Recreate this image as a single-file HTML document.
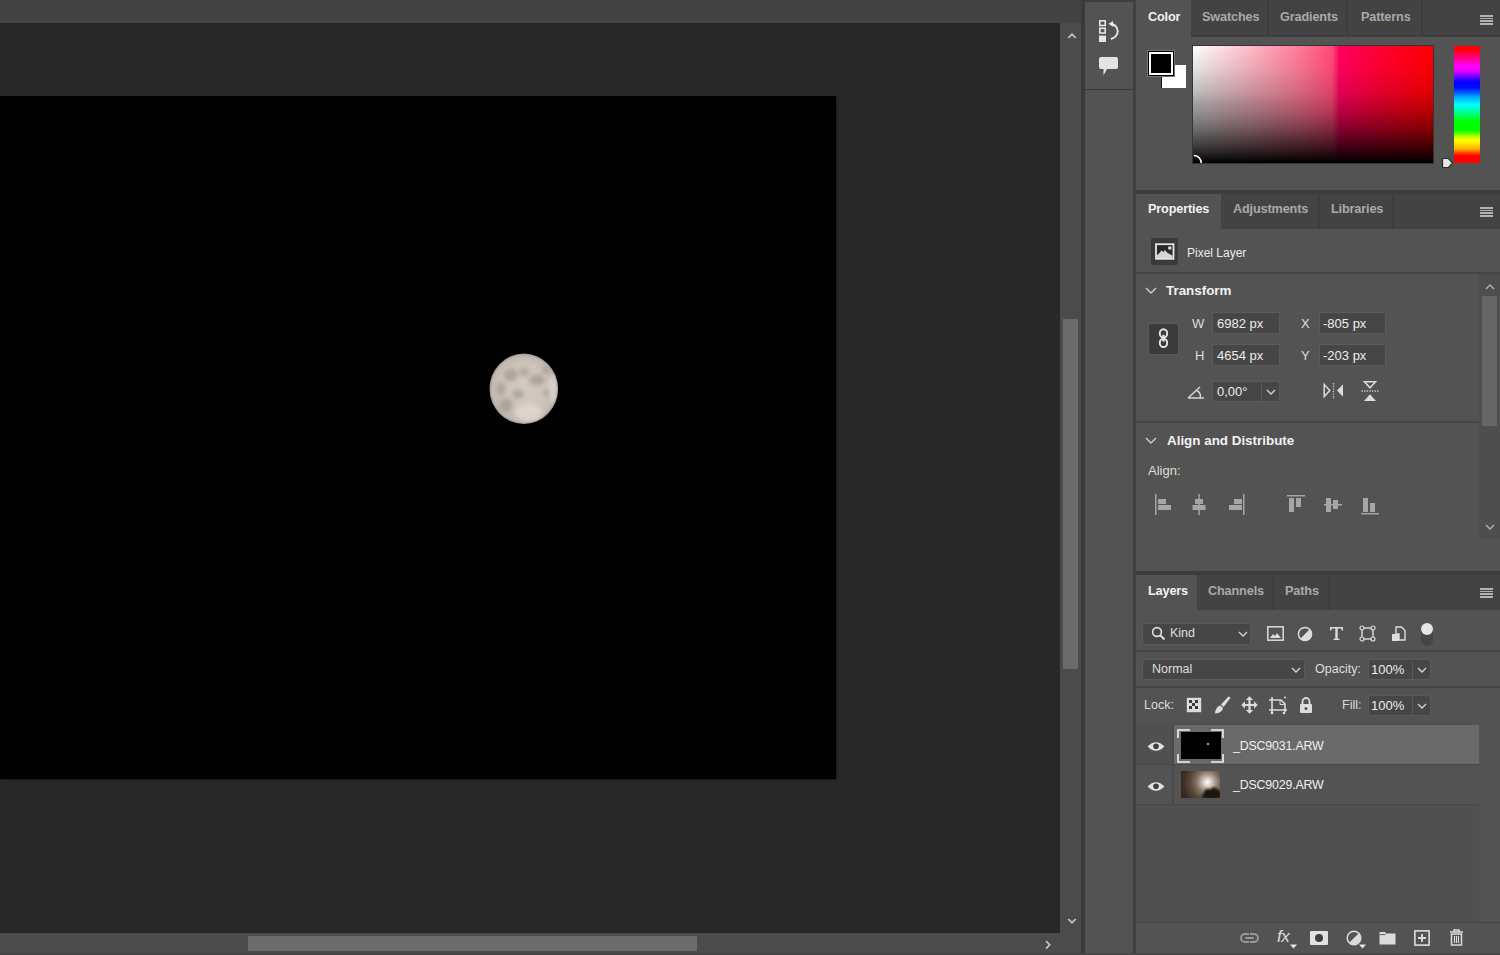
<!DOCTYPE html>
<html><head><meta charset="utf-8">
<style>
*{box-sizing:border-box;margin:0;padding:0}
html,body{width:1500px;height:955px;overflow:hidden;background:#282828;font-family:"Liberation Sans",sans-serif;color:#e6e6e6}
.a{position:absolute}
.t{position:absolute;line-height:1;white-space:nowrap}
.tab{position:absolute;background:#434343}
.tab.on{background:#535353}
.tt{position:absolute;line-height:1;white-space:nowrap;font-size:12.7px;letter-spacing:-0.15px;font-weight:bold;color:#a9a9a9}
.tt.on{color:#f2f2f2}
.tsep{position:absolute;width:2px;background:#3c3c3c}
.hamb{position:absolute;width:13px;height:10px;background:repeating-linear-gradient(#b4b4b4 0 1.6px,transparent 1.6px 2.75px)}
.inp{position:absolute;background:#464646;border:1px solid #5b5b5b;border-radius:1px}
.lbl{position:absolute;line-height:1;white-space:nowrap;font-size:12.5px;color:#dedede}
.num{position:absolute;line-height:1;white-space:nowrap;font-size:13px;color:#ececec}
.hdr{position:absolute;line-height:1;white-space:nowrap;font-size:13.4px;font-weight:bold;color:#f2f2f2}
.ln{position:absolute;background:#474747}
svg{position:absolute;overflow:visible}
</style></head><body>
<!-- ============ CANVAS AREA ============ -->
<div class="a" style="left:0;top:0;width:1081px;height:23px;background:#434343"></div>
<div class="a" style="left:0;top:22px;width:1060px;height:1px;background:#474747"></div>
<div class="a" style="left:0;top:96px;width:836px;height:683px;background:#000;box-shadow:1px 1px 2px rgba(0,0,0,.35)"></div>
<!-- moon -->
<svg style="left:0;top:0" width="1" height="1"><defs>
<radialGradient id="mg" cx="0.5" cy="0.5" r="0.5">
<stop offset="0" stop-color="#d3cbc4"/><stop offset="0.7" stop-color="#cdc4bc"/><stop offset="0.93" stop-color="#c2b8b0"/><stop offset="1" stop-color="#9d948d"/></radialGradient>
<radialGradient id="glow" cx="0.62" cy="0.28" r="0.6">
<stop offset="0" stop-color="#fff" stop-opacity=".9"/><stop offset="0.25" stop-color="#e9ddd0" stop-opacity=".6"/><stop offset="1" stop-color="#5a4a3d" stop-opacity="0"/></radialGradient>
</defs></svg>
<svg style="left:487px;top:351px" width="74" height="76" viewBox="-2 -2 74 76">
<defs><filter id="bl" x="-20%" y="-20%" width="140%" height="140%"><feGaussianBlur stdDeviation="2.2"/></filter>
<filter id="bl2"><feGaussianBlur stdDeviation="0.7"/></filter>
<clipPath id="mc"><ellipse cx="34.8" cy="35.8" rx="34" ry="35"/></clipPath></defs>
<ellipse cx="34.8" cy="35.8" rx="34.3" ry="35.2" fill="url(#mg)" filter="url(#bl2)"/>
<g clip-path="url(#mc)"><g fill="#8f8680" opacity=".5" filter="url(#bl)">
<ellipse cx="22" cy="22" rx="7" ry="6.5"/><ellipse cx="35" cy="19" rx="5" ry="4"/><ellipse cx="48" cy="27" rx="8" ry="5.5"/>
<ellipse cx="57" cy="17" rx="4" ry="3.5"/><ellipse cx="17" cy="52" rx="7" ry="7"/><ellipse cx="29" cy="41" rx="6" ry="4.5"/>
<ellipse cx="12" cy="36" rx="4" ry="7"/><ellipse cx="58" cy="40" rx="3" ry="4"/>
</g>
<g fill="#e8e0d8" opacity=".6" filter="url(#bl)"><ellipse cx="40" cy="60" rx="14" ry="9"/><ellipse cx="64" cy="36" rx="4" ry="14"/></g></g>
</svg>
<!-- vertical scrollbar -->
<div class="a" style="left:1060px;top:23px;width:21px;height:932px;background:#4b4b4b"></div>
<div class="a" style="left:1063px;top:319px;width:15px;height:350px;background:#6b6b6b"></div>
<svg style="left:1067px;top:33px" width="10" height="6"><path d="M1.2 5 L5 1.3 L8.8 5" fill="none" stroke="#c4c4c4" stroke-width="1.7"/></svg>
<svg style="left:1067px;top:918px" width="10" height="6"><path d="M1.2 1 L5 4.7 L8.8 1" fill="none" stroke="#c4c4c4" stroke-width="1.7"/></svg>
<!-- horizontal scrollbar -->
<div class="a" style="left:0;top:933px;width:1060px;height:20px;background:#4b4b4b"></div>
<div class="a" style="left:0;top:953px;width:1081px;height:2px;background:#444"></div>
<div class="a" style="left:248px;top:936px;width:449px;height:15px;background:#6b6b6b"></div>
<svg style="left:1045px;top:940px" width="6" height="10"><path d="M1 1 L4.7 4.8 L1 8.6" fill="none" stroke="#c4c4c4" stroke-width="1.7"/></svg>
<!-- dark separators -->
<div class="a" style="left:1081px;top:0;width:4px;height:955px;background:#3a3a3a"></div>
<div class="a" style="left:1133px;top:0;width:3px;height:955px;background:#404040"></div>
<!-- toolbar column -->
<div class="a" style="left:1085px;top:0;width:48px;height:955px;background:#535353"></div>
<div class="a" style="left:1085px;top:0;width:48px;height:2px;background:#3f3f3f"></div>
<div class="a" style="left:1085px;top:89px;width:48px;height:1px;background:#3a3a3a"></div>
<!-- history icon -->
<svg style="left:1099px;top:20px" width="20" height="23" viewBox="0 0 20 23">
<rect x="0.8" y="0.8" width="5.4" height="4.7" fill="none" stroke="#e6e6e6" stroke-width="1.6"/>
<rect x="0.8" y="8.3" width="5.4" height="4.7" fill="none" stroke="#e6e6e6" stroke-width="1.6"/>
<rect x="0" y="15.6" width="7" height="6.4" fill="#e6e6e6"/>
<path d="M12.3 4 C17.5 4.5 19.5 10 18.3 13.5 C17.5 16 15 18 12 19" fill="none" stroke="#e6e6e6" stroke-width="1.9"/>
<path d="M9.5 3.8 L14 1 L14.3 7 Z" fill="#e6e6e6"/>
</svg>
<!-- comment icon -->
<svg style="left:1099px;top:57px" width="20" height="19" viewBox="0 0 20 19">
<path d="M2 0 H17 Q19 0 19 2 V10 Q19 12 17 12 H8 L4.5 18.5 L4.5 12 H2 Q0 12 0 10 V2 Q0 0 2 0 Z" fill="#e3e3e3"/>
</svg>
<!-- ============ COLOR PANEL ============ -->
<div class="a" style="left:1136px;top:0;width:364px;height:190px;background:#535353"></div>
<div class="tab" style="left:1191px;top:0;width:309px;height:37px"></div>
<div class="a" style="left:1136px;top:35px;width:364px;height:2px;background:#3e3e3e"></div>
<div class="tab on" style="left:1136px;top:2px;width:55px;height:36px"></div>
<div class="tsep" style="left:1267px;top:0;height:36px"></div>
<div class="tsep" style="left:1346px;top:0;height:36px"></div>
<div class="tsep" style="left:1421px;top:0;height:36px"></div>
<div class="tt on" style="left:1148px;top:10.5px">Color</div>
<div class="tt" style="left:1202px;top:10.5px">Swatches</div>
<div class="tt" style="left:1280px;top:10.5px">Gradients</div>
<div class="tt" style="left:1361px;top:10.5px">Patterns</div>
<div class="hamb" style="left:1480px;top:15px"></div>
<!-- swatches -->
<div class="a" style="left:1161px;top:65px;width:1px;height:23px;background:#111"></div>
<div class="a" style="left:1162px;top:65px;width:24px;height:23px;background:#fff"></div>
<div class="a" style="left:1147px;top:50px;width:28px;height:27px;background:#767676"></div>
<div class="a" style="left:1148px;top:51px;width:26px;height:25px;background:#000"></div>
<div class="a" style="left:1149px;top:52px;width:24px;height:23px;background:#fff"></div>
<div class="a" style="left:1151px;top:54px;width:20px;height:19px;background:#000"></div>
<!-- color field -->
<div class="a" style="left:1192px;top:45px;width:242px;height:119px;background:#353535"></div>
<div class="a" style="left:1193px;top:46px;width:240px;height:117px;background:linear-gradient(to bottom,rgba(0,0,0,0) 0%,rgba(0,0,0,.03) 20%,rgba(0,0,0,.12) 40%,rgba(0,0,0,.27) 55%,rgba(0,0,0,.47) 70%,rgba(0,0,0,.72) 85%,rgba(0,0,0,1) 100%),linear-gradient(to right,#ffffff 0%,#ffc0cc 22%,#ff7896 45%,#ff4a78 58%,#ff005e 61%,#ff002c 80%,#ff0000 100%)"></div>
<div class="a" style="left:1193px;top:46px;width:240px;height:117px;background:linear-gradient(to bottom,rgba(0,0,0,0) 0%,rgba(0,0,0,.1) 25%,rgba(0,0,0,.2) 50%,rgba(0,0,0,.15) 80%,rgba(0,0,0,0) 100%);-webkit-mask-image:linear-gradient(to right,#000 0%,rgba(0,0,0,.6) 30%,transparent 60%)"></div>
<svg style="left:1188px;top:150px" width="18" height="14"><path d="M5.8 5.5 A7.5 7.5 0 0 1 13.3 13" fill="none" stroke="#fff" stroke-width="1.6"/></svg>
<!-- hue bar -->
<div class="a" style="left:1454px;top:46px;width:26px;height:117px;background:linear-gradient(to bottom,#ff0000 0%,#ff0008 3%,#ff00a0 12%,#ff00ff 17%,#f000ff 21%,#4000ff 28%,#0000ff 31%,#0010ff 36%,#00b0ff 44%,#00ffff 50%,#00ff90 57%,#00ff00 64%,#00ff00 72%,#d0ff00 78%,#ffff00 81%,#ffb000 88%,#ff3000 92%,#ff0000 94%,#ff0000 100%)"></div>
<svg style="left:1441px;top:157px" width="13" height="13" viewBox="0 0 13 13"><path d="M2.5 1.5 H7.5 L11.5 6 L7.5 10.5 H2.5 Q1.5 10.5 1.5 9.5 V2.5 Q1.5 1.5 2.5 1.5 Z" fill="#e6e6e6" stroke="#2a2a2a" stroke-width="1.2"/></svg>
<div class="a" style="left:1136px;top:190px;width:364px;height:4px;background:#3c3c3c"></div>
<!-- ============ PROPERTIES PANEL ============ -->
<div class="a" style="left:1136px;top:194px;width:364px;height:377px;background:#535353"></div>
<div class="tab" style="left:1221px;top:194px;width:279px;height:35px"></div>
<div class="tab on" style="left:1136px;top:194px;width:85px;height:36px"></div>
<div class="tsep" style="left:1318px;top:194px;height:35px"></div>
<div class="tsep" style="left:1392px;top:194px;height:35px"></div>
<div class="tt on" style="left:1148px;top:203px">Properties</div>
<div class="tt" style="left:1233px;top:203px">Adjustments</div>
<div class="tt" style="left:1331px;top:203px">Libraries</div>
<div class="hamb" style="left:1480px;top:207px"></div>
<!-- pixel layer -->
<div class="a" style="left:1151px;top:238px;width:27px;height:27px;background:#3a3a3a;border-radius:2px"></div>
<svg style="left:1155px;top:243px" width="20" height="17" viewBox="0 0 20 17">
<rect x="1" y="1.2" width="17.5" height="14.6" fill="#2a2a2a" stroke="#e6e6e6" stroke-width="1.8"/>
<path d="M2 15 L2 12 L4.5 10 L6.5 7.5 L8.5 9 L10 7 L12 9.5 L14.5 11 L17.5 12.5 L17.5 15 Z" fill="#d4d4d4"/>
<rect x="13.3" y="3.5" width="3" height="3" fill="#e6e6e6"/>
</svg>
<div class="lbl" style="left:1187px;top:247px;font-size:12px;color:#ececec">Pixel Layer</div>
<div class="ln" style="left:1136px;top:272px;width:364px;height:2px"></div>
<!-- scrollbar -->
<div class="a" style="left:1479px;top:274px;width:21px;height:265px;background:#4e4e4e"></div>
<div class="a" style="left:1482px;top:296px;width:15px;height:130px;background:#666"></div>
<svg style="left:1485px;top:284px" width="10" height="6"><path d="M1 5 L5 1 L9 5" fill="none" stroke="#b5b5b5" stroke-width="1.3"/></svg>
<svg style="left:1485px;top:524px" width="10" height="6"><path d="M1 1 L5 5 L9 1" fill="none" stroke="#b5b5b5" stroke-width="1.3"/></svg>
<!-- transform -->
<svg style="left:1145px;top:287px" width="12" height="8"><path d="M1 1 L6 6 L11 1" fill="none" stroke="#d0d0d0" stroke-width="1.4"/></svg>
<div class="hdr" style="left:1166px;top:284.3px">Transform</div>
<div class="a" style="left:1149px;top:324px;width:29px;height:30px;background:#3b3b3b;border-radius:2px;box-shadow:0 0 0 1px #5a5a5a"></div>
<svg style="left:1158px;top:328px" width="11" height="21" viewBox="0 0 11 21">
<ellipse cx="5.5" cy="5.4" rx="3.7" ry="4.1" fill="none" stroke="#e6e6e6" stroke-width="1.9"/>
<ellipse cx="5.5" cy="14.9" rx="3.7" ry="4.1" fill="none" stroke="#e6e6e6" stroke-width="1.9"/>
<rect x="4.4" y="6.8" width="2.2" height="6.8" fill="#e6e6e6"/>
</svg>
<div class="lbl" style="left:1192px;top:317px;font-size:13px">W</div>
<div class="lbl" style="left:1195px;top:349px;font-size:13px">H</div>
<div class="lbl" style="left:1301px;top:317px;font-size:13px">X</div>
<div class="lbl" style="left:1301px;top:349px;font-size:13px">Y</div>
<div class="inp" style="left:1212px;top:312px;width:68px;height:22px"></div>
<div class="inp" style="left:1212px;top:344px;width:68px;height:22px"></div>
<div class="inp" style="left:1319px;top:312px;width:67px;height:22px"></div>
<div class="inp" style="left:1319px;top:344px;width:67px;height:22px"></div>
<div class="num" style="left:1217px;top:317px">6982 px</div>
<div class="num" style="left:1217px;top:349px">4654 px</div>
<div class="num" style="left:1323px;top:317px">-805 px</div>
<div class="num" style="left:1323px;top:349px">-203 px</div>
<!-- angle -->
<svg style="left:1187px;top:385px" width="19" height="14" viewBox="0 0 19 14"><path d="M1 13 L17 13 M1 13 L13 2 M10 5.5 Q14 8 13.5 13" fill="none" stroke="#d6d6d6" stroke-width="1.5"/></svg>
<div class="inp" style="left:1212px;top:381px;width:68px;height:21px"></div>
<div class="a" style="left:1261px;top:382px;width:1px;height:19px;background:#5a5a5a"></div>
<div class="num" style="left:1217px;top:385px">0,00°</div>
<svg style="left:1266px;top:389px" width="10" height="6"><path d="M1 1 L5 5 L9 1" fill="none" stroke="#d6d6d6" stroke-width="1.3"/></svg>
<!-- flip icons -->
<svg style="left:1323px;top:383px" width="21" height="16" viewBox="0 0 21 16">
<path d="M1.2 1.5 L6.8 7.5 L1.2 13.5 Z" fill="none" stroke="#dcdcdc" stroke-width="1.5"/>
<path d="M20 1.2 L14 7.5 L20 13.8 Z" fill="#dcdcdc"/>
<path d="M10.5 0 V16" stroke="#c4c4c4" stroke-width="1.3" stroke-dasharray="1.4 1.2"/>
</svg>
<svg style="left:1360px;top:380px" width="20" height="22" viewBox="0 0 20 22">
<path d="M4.5 1.8 H15.5 L10 7.8 Z" fill="none" stroke="#dcdcdc" stroke-width="1.5"/>
<path d="M4 21 H16 L10 14.3 Z" fill="#dcdcdc"/>
<path d="M1.5 11 H18.5" stroke="#c4c4c4" stroke-width="1.3" stroke-dasharray="1.4 1.2"/>
</svg>
<div class="ln" style="left:1136px;top:421px;width:343px;height:2px"></div>
<!-- align -->
<svg style="left:1145px;top:437px" width="12" height="8"><path d="M1 1 L6 6 L11 1" fill="none" stroke="#d0d0d0" stroke-width="1.4"/></svg>
<div class="hdr" style="left:1167px;top:434.3px">Align and Distribute</div>
<div class="lbl" style="left:1148px;top:464px;font-size:13px">Align:</div>
<svg style="left:1154px;top:494px" width="230" height="22" viewBox="0 0 230 22" fill="#a6a6a6">
<rect x="1" y="0" width="1.5" height="21"/><rect x="4" y="5" width="8" height="5"/><rect x="4" y="11" width="13" height="5"/>
<rect x="44.3" y="0" width="1.5" height="21"/><rect x="41" y="5" width="8" height="5"/><rect x="38.5" y="11" width="13" height="5"/>
<rect x="89" y="0" width="1.5" height="21"/><rect x="80" y="5" width="8" height="5"/><rect x="75" y="11" width="13" height="5"/>
<rect x="133" y="1" width="18" height="1.5"/><rect x="135" y="4" width="5" height="14"/><rect x="142" y="4" width="5" height="9"/>
<rect x="170" y="10" width="18" height="1.5"/><rect x="172" y="4" width="5" height="14"/><rect x="179" y="6" width="5" height="9"/>
<rect x="207" y="19" width="18" height="1.5"/><rect x="209" y="4" width="5" height="14"/><rect x="216" y="9" width="5" height="9"/>
</svg>
<div class="a" style="left:1136px;top:571px;width:364px;height:4px;background:#3c3c3c"></div>
<!-- ============ LAYERS PANEL ============ -->
<div class="a" style="left:1136px;top:575px;width:364px;height:380px;background:#535353"></div>
<div class="tab" style="left:1197px;top:575px;width:303px;height:35px"></div>
<div class="tab on" style="left:1136px;top:575px;width:61px;height:36px"></div>
<div class="tsep" style="left:1272px;top:575px;height:35px"></div>
<div class="tsep" style="left:1328px;top:575px;height:35px"></div>
<div class="tt on" style="left:1148px;top:584.5px">Layers</div>
<div class="tt" style="left:1208px;top:584.5px">Channels</div>
<div class="tt" style="left:1285px;top:584.5px">Paths</div>
<div class="hamb" style="left:1480px;top:588px"></div>
<!-- kind row -->
<div class="inp" style="left:1142px;top:623px;width:109px;height:22px;border-color:#5a5a5a;border-radius:3px"></div>
<svg style="left:1151px;top:626px" width="15" height="15" viewBox="0 0 15 15"><circle cx="6" cy="6" r="4.4" fill="none" stroke="#e0e0e0" stroke-width="1.6"/><path d="M9.2 9.2 L13.5 13.5" stroke="#e0e0e0" stroke-width="2"/></svg>
<div class="lbl" style="left:1170px;top:627px">Kind</div>
<svg style="left:1238px;top:631px" width="10" height="6"><path d="M1 1 L5 5 L9 1" fill="none" stroke="#d6d6d6" stroke-width="1.3"/></svg>
<svg style="left:1267px;top:626px" width="17" height="15" viewBox="0 0 17 15"><rect x="0.8" y="0.8" width="15.4" height="13.4" fill="none" stroke="#dcdcdc" stroke-width="1.5"/><path d="M3 12 L6 8 L8 10 L10 7 L14 12 Z" fill="#dcdcdc"/></svg>
<svg style="left:1297px;top:626px" width="16" height="16" viewBox="0 0 16 16"><circle cx="8" cy="8" r="6.6" fill="none" stroke="#dcdcdc" stroke-width="1.5"/><path d="M12.7 3.3 A6.6 6.6 0 0 1 3.3 12.7 Z" fill="#dcdcdc"/></svg>
<svg style="left:1329px;top:626px" width="15" height="15" viewBox="0 0 15 15"><path d="M1 1 H14 V4.5 H12.8 L12.2 2.6 H8.7 V12.5 L10.5 13 V14 H4.5 V13 L6.3 12.5 V2.6 H2.8 L2.2 4.5 H1 Z" fill="#dcdcdc"/></svg>
<svg style="left:1359px;top:625px" width="17" height="17" viewBox="0 0 17 17"><rect x="3" y="3" width="11" height="11" fill="none" stroke="#dcdcdc" stroke-width="1.4"/><circle cx="3" cy="3" r="2" fill="#535353" stroke="#dcdcdc" stroke-width="1.2"/><circle cx="14" cy="3" r="2" fill="#535353" stroke="#dcdcdc" stroke-width="1.2"/><circle cx="3" cy="14" r="2" fill="#535353" stroke="#dcdcdc" stroke-width="1.2"/><circle cx="14" cy="14" r="2" fill="#535353" stroke="#dcdcdc" stroke-width="1.2"/></svg>
<svg style="left:1391px;top:626px" width="15" height="16" viewBox="0 0 15 16"><path d="M5 1 H10.5 L14 4.5 V14 H8 V8 H5 Z" fill="none" stroke="#dcdcdc" stroke-width="1.4"/><rect x="1" y="8" width="7" height="7" fill="#dcdcdc"/></svg>
<div class="a" style="left:1421px;top:623px;width:12px;height:23px;border-radius:6px;background:#454545"></div>
<div class="a" style="left:1421px;top:623px;width:12px;height:12px;border-radius:6px;background:#e6e6e6"></div>
<div class="ln" style="left:1136px;top:650px;width:364px;height:2px;background:#474747"></div>
<!-- blend row -->
<div class="inp" style="left:1142px;top:659px;width:163px;height:21px;border-color:#5a5a5a;border-radius:3px"></div>
<div class="lbl" style="left:1152px;top:663px">Normal</div>
<svg style="left:1291px;top:667px" width="10" height="6"><path d="M1 1 L5 5 L9 1" fill="none" stroke="#d6d6d6" stroke-width="1.3"/></svg>
<div class="lbl" style="left:1315px;top:663px">Opacity:</div>
<div class="inp" style="left:1368px;top:659px;width:63px;height:21px;border-color:#5a5a5a;border-radius:3px"></div>
<div class="a" style="left:1412px;top:661px;width:1px;height:18px;background:#5a5a5a"></div>
<div class="num" style="left:1371px;top:663px">100%</div>
<svg style="left:1417px;top:667px" width="10" height="6"><path d="M1 1 L5 5 L9 1" fill="none" stroke="#d6d6d6" stroke-width="1.3"/></svg>
<div class="ln" style="left:1136px;top:686px;width:364px;height:2px;background:#474747"></div>
<!-- lock row -->
<div class="lbl" style="left:1144px;top:699px">Lock:</div>
<svg style="left:1186px;top:697px" width="16" height="16" viewBox="0 0 16 16"><rect x="0.8" y="0.8" width="14.4" height="14.4" fill="#dcdcdc"/><g fill="#3a3a3a"><rect x="3" y="3" width="3" height="3"/><rect x="9" y="3" width="3" height="3"/><rect x="6" y="6" width="3" height="3"/><rect x="3" y="9" width="3" height="3"/><rect x="9" y="9" width="3" height="3"/></g></svg>
<svg style="left:1214px;top:696px" width="17" height="18" viewBox="0 0 17 18"><path d="M15 0.5 Q16.8 1.2 16 2.6 L9.6 11 L7 8.6 L14 1 Z" fill="#dcdcdc"/><path d="M6.3 9.3 L9 11.9 Q8.5 16.5 1 17.5 Q1.5 11 6.3 9.3 Z" fill="#dcdcdc"/></svg>
<svg style="left:1241px;top:696px" width="17" height="18" viewBox="0 0 17 18" fill="#dcdcdc"><path d="M8.5 0.3 L12.2 4 H9.6 V7.9 H13 V5.3 L16.7 9 L13 12.7 V10.1 H9.6 V14 H12.2 L8.5 17.7 L4.8 14 H7.4 V10.1 H4 V12.7 L0.3 9 L4 5.3 V7.9 H7.4 V4 H4.8 Z"/></svg>
<svg style="left:1268px;top:696px" width="20" height="19" viewBox="0 0 20 19"><path d="M4 1 V16 M1 4 H13 L17 8 V16 M1 14 H19" fill="none" stroke="#dcdcdc" stroke-width="1.6"/><path d="M12 4 V8.5 H16.5" fill="none" stroke="#dcdcdc" stroke-width="1"/><circle cx="4" cy="17" r="1.3" fill="#dcdcdc"/><circle cx="16" cy="17" r="1.3" fill="#dcdcdc"/><circle cx="17" cy="1.5" r="1" fill="#dcdcdc"/></svg>
<svg style="left:1299px;top:697px" width="14" height="16" viewBox="0 0 14 16"><path d="M3.5 7 V4.5 A3.5 3.5 0 0 1 10.5 4.5 V7" fill="none" stroke="#dcdcdc" stroke-width="1.8"/><rect x="1" y="7" width="12" height="9" rx="1" fill="#dcdcdc"/><circle cx="7" cy="11.5" r="1.5" fill="#535353"/></svg>
<div class="lbl" style="left:1342px;top:699px">Fill:</div>
<div class="inp" style="left:1368px;top:695px;width:63px;height:21px;border-color:#5a5a5a;border-radius:3px"></div>
<div class="a" style="left:1412px;top:697px;width:1px;height:17px;background:#5a5a5a"></div>
<div class="num" style="left:1371px;top:699px">100%</div>
<svg style="left:1417px;top:703px" width="10" height="6"><path d="M1 1 L5 5 L9 1" fill="none" stroke="#d6d6d6" stroke-width="1.3"/></svg>
<!-- layer list -->
<div class="a" style="left:1136px;top:724px;width:343px;height:199px;background:#505050"></div>
<div class="a" style="left:1173px;top:725px;width:306px;height:39px;background:#6a6a6a"></div>
<div class="a" style="left:1136px;top:764px;width:343px;height:1px;background:#484848"></div>
<div class="a" style="left:1136px;top:765px;width:343px;height:39px;background:#535353"></div>
<div class="a" style="left:1136px;top:804px;width:343px;height:1px;background:#484848"></div>
<div class="a" style="left:1172px;top:725px;width:2px;height:80px;background:#4a4a4a"></div>
<svg style="left:1147px;top:741px" width="18" height="11" viewBox="0 0 18 11"><path d="M0.5 5.5 Q9 -3 17.5 5.5 Q9 14 0.5 5.5 Z" fill="#e2e2e2"/><circle cx="9" cy="5.3" r="2.8" fill="#3e3e3e"/></svg>
<svg style="left:1147px;top:781px" width="18" height="11" viewBox="0 0 18 11"><path d="M0.5 5.5 Q9 -3 17.5 5.5 Q9 14 0.5 5.5 Z" fill="#e2e2e2"/><circle cx="9" cy="5.3" r="2.8" fill="#3e3e3e"/></svg>
<div class="a" style="left:1181px;top:732px;width:40px;height:27px;background:#000"></div>
<div class="a" style="left:1207px;top:743px;width:2px;height:2px;background:#ddd;border-radius:1px"></div>
<svg style="left:1177px;top:729px" width="47" height="34" viewBox="0 0 47 34"><path d="M1 9 V1 H13 M34 1 H46 V9 M46 25 V33 H34 M13 33 H1 V25" fill="none" stroke="#f2f2f2" stroke-width="1.6"/></svg>
<div class="a" style="left:1181px;top:771px;width:39px;height:27px;background:radial-gradient(circle at 68% 42%,#ffffff 0,#e6ded6 9%,#b4a89a 22%,#857464 36%,#5a4a3c 55%,#3a2e25 80%,#2c231c 100%)"></div>
<svg style="left:1181px;top:771px;overflow:hidden" width="39" height="27" viewBox="0 0 39 27"><defs><filter id="tb"><feGaussianBlur stdDeviation="0.8"/></filter></defs>
<g fill="#1a1410" filter="url(#tb)"><ellipse cx="27" cy="22" rx="4" ry="4"/><ellipse cx="33" cy="21" rx="4" ry="4.5"/><ellipse cx="37" cy="23" rx="3" ry="4"/><ellipse cx="30" cy="26" rx="8" ry="2.5"/><ellipse cx="23.5" cy="25" rx="2.5" ry="2.5"/></g></svg>
<div class="lbl" style="left:1233px;top:740px;font-size:12.4px;letter-spacing:-0.18px;color:#f0f0f0">_DSC9031.ARW</div>
<div class="lbl" style="left:1233px;top:779px;font-size:12.4px;letter-spacing:-0.18px;color:#f0f0f0">_DSC9029.ARW</div>
<div class="a" style="left:1136px;top:922px;width:364px;height:1px;background:#444"></div>
<!-- bottom icons -->
<svg style="left:1240px;top:932px" width="19" height="12" viewBox="0 0 19 12"><path d="M9 2 H5 A4 4 0 0 0 5 10 H9 M10 2 H14 A4 4 0 0 1 14 10 H10 M5.5 6 H13.5" fill="none" stroke="#9a9a9a" stroke-width="1.9"/></svg>
<div class="t" style="left:1277px;top:928px;font-size:17px;font-style:italic;color:#dedede;font-family:'Liberation Sans',sans-serif;letter-spacing:-0.5px">fx</div>
<svg style="left:1290px;top:944px" width="7" height="5"><path d="M0 0.5 H7 L3.5 4.5 Z" fill="#e6e6e6"/></svg>
<svg style="left:1310px;top:931px" width="18" height="14" viewBox="0 0 18 14"><rect x="0" y="0" width="18" height="14" rx="1" fill="#e2e2e2"/><circle cx="9" cy="7" r="4" fill="#3e3e3e"/></svg>
<svg style="left:1346px;top:930px" width="16" height="16" viewBox="0 0 16 16"><circle cx="8" cy="8" r="6.8" fill="none" stroke="#dcdcdc" stroke-width="1.5"/><path d="M12.8 3.2 A6.8 6.8 0 0 1 3.2 12.8 Z" fill="#dcdcdc"/></svg>
<svg style="left:1359px;top:944px" width="7" height="5"><path d="M0 0.5 H7 L3.5 4.5 Z" fill="#e6e6e6"/></svg>
<svg style="left:1379px;top:931px" width="17" height="14" viewBox="0 0 17 14"><path d="M0.5 1 H6 L7 2.5 H16.5 V13.5 H0.5 Z" fill="#dcdcdc"/><path d="M0.5 3.6 H6.5" stroke="#535353" stroke-width="0.9"/></svg>
<svg style="left:1414px;top:930px" width="16" height="16" viewBox="0 0 16 16"><rect x="0.9" y="0.9" width="14.2" height="14.2" fill="none" stroke="#dcdcdc" stroke-width="1.6"/><path d="M8 4 V12 M4 8 H12" stroke="#dcdcdc" stroke-width="1.8"/></svg>
<svg style="left:1449px;top:929px" width="15" height="17" viewBox="0 0 15 17"><path d="M1 3 H14 M5 3 V1 H10 V3" fill="none" stroke="#dcdcdc" stroke-width="1.5"/><path d="M2.5 5 H12.5 V16 H2.5 Z" fill="none" stroke="#dcdcdc" stroke-width="1.5"/><path d="M5.5 7 V14 M7.5 7 V14 M9.5 7 V14" stroke="#dcdcdc" stroke-width="1.1"/></svg>
<div class="a" style="left:1081px;top:953px;width:419px;height:2px;background:#474747"></div>
</body></html>
